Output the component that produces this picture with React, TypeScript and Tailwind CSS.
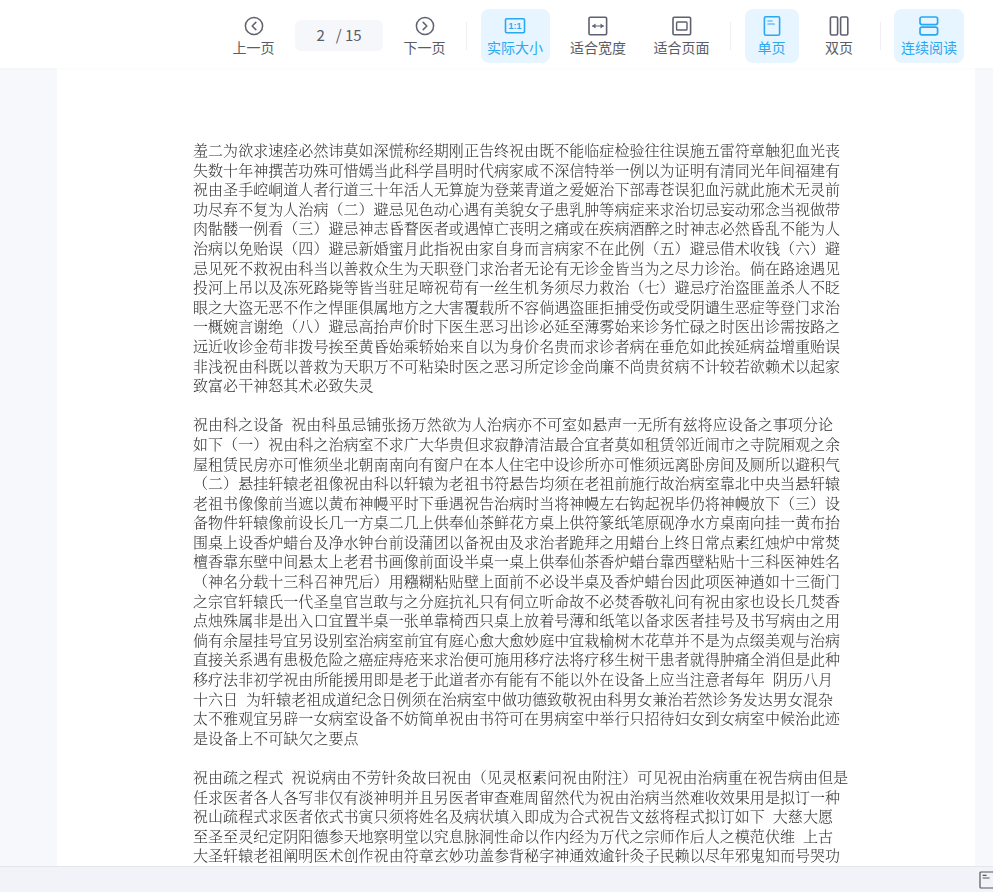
const paragraphs: string[][] = [
  [
    "羞二为欲求速痊必然讳莫如深慌称经期刚正告终祝由既不能临症检验往往误施五雷符章触犯血光丧",
    "失数十年神撰苦功殊可惜嫣当此科学昌明时代病家咸不深信特举一例以为证明有清同光年间福建有",
    "祝由圣手崆峒道人者行道三十年活人无算旋为登莱青道之爱姬治下部毒苍误犯血污就此施术无灵前",
    "功尽弃不复为人治病（二）避忌见色动心遇有美貌女子患乳肿等病症来求治切忌妄动邪念当视做带",
    "肉骷髅一例看（三）避忌神志昏瞀医者或遇悼亡丧明之痛或在疾病酒醉之时神志必然昏乱不能为人",
    "治病以免贻误（四）避忌新婚蜜月此指祝由家自身而言病家不在此例（五）避忌借术收钱（六）避",
    "忌见死不救祝由科当以善救众生为天职登门求治者无论有无诊金皆当为之尽力诊治。倘在路途遇见",
    "投河上吊以及冻死路毙等皆当驻足啼祝苟有一丝生机务须尽力救治（七）避忌疗治盗匪盖杀人不眨",
    "眼之大盗无恶不作之悍匪俱属地方之大害覆载所不容倘遇盗匪拒捕受伤或受阴谴生恶症等登门求治",
    "一概婉言谢绝（八）避忌高抬声价时下医生恶习出诊必延至薄雾始来诊务忙碌之时医出诊需按路之",
    "远近收诊金苟非拨号挨至黄昏始乘轿始来自以为身价名贵而求诊者病在垂危如此挨延病益增重贻误",
    "非浅祝由科既以普救为天职万不可粘染时医之恶习所定诊金尚廉不尚贵贫病不计较若欲赖术以起家",
    "致富必干神怒其术必致失灵",
  ],
  [
    "祝由科之设备 祝由科虽忌铺张扬万然欲为人治病亦不可室如悬声一无所有兹将应设备之事项分论",
    "如下（一）祝由科之治病室不求广大华贵但求寂静清洁最合宜者莫如租赁邻近闹市之寺院厢观之余",
    "屋租赁民房亦可惟须坐北朝南南向有窗户在本人住宅中设诊所亦可惟须远离卧房间及厕所以避积气",
    "（二）悬挂轩辕老祖像祝由科以轩辕为老祖书符悬告均须在老祖前施行故治病室靠北中央当悬轩辕",
    "老祖书像像前当遮以黄布神幔平时下垂遇祝告治病时当将神幔左右钩起祝毕仍将神幔放下（三）设",
    "备物件轩辕像前设长几一方桌二几上供奉仙茶鲜花方桌上供符篆纸笔原砚净水方桌南向挂一黄布抬",
    "围桌上设香炉蜡台及净水钟台前设蒲团以备祝由及求治者跪拜之用蜡台上终日常点素红烛炉中常焚",
    "檀香靠东壁中间悬太上老君书画像前面设半桌一桌上供奉仙茶香炉蜡台靠西壁粘贴十三科医神姓名",
    "（神名分载十三科召神咒后）用糨糊粘贴壁上面前不必设半桌及香炉蜡台因此项医神遒如十三衙门",
    "之宗官轩辕氏一代圣皇官岂敢与之分庭抗礼只有伺立听命故不必焚香敬礼问有祝由家也设长几焚香",
    "点烛殊属非是出入口宜置半桌一张单靠椅西只桌上放着号薄和纸笔以备求医者挂号及书写病由之用",
    "倘有余屋挂号宜另设别室治病室前宜有庭心愈大愈妙庭中宜栽榆树木花草并不是为点缀美观与治病",
    "直接关系遇有患极危险之癌症痔疮来求治便可施用移疗法将疗移生树干患者就得肿痛全消但是此种",
    "移疗法非初学祝由所能援用即是老于此道者亦有能有不能以外在设备上应当注意者每年 阴历八月",
    "十六日 为轩辕老祖成道纪念日例须在治病室中做功德致敬祝由科男女兼治若然诊务发达男女混杂",
    "太不雅观宜另辟一女病室设备不妨简单祝由书符可在男病室中举行只招待妇女到女病室中候治此迹",
    "是设备上不可缺欠之要点",
  ],
  [
    "祝由疏之程式 祝说病由不劳针灸故曰祝由（见灵枢素问祝由附注）可见祝由治病重在祝告病由但是",
    "任求医者各人各写非仅有淡神明并且另医者审查难周留然代为祝由治病当然难收效果用是拟订一种",
    "祝山疏程式求医者依式书寅只须将姓名及病状填入即成为合式祝告文兹将程式拟订如下 大慈大愿",
    "至圣至灵纪定阴阳德参天地察明堂以究息脉洞性命以作内经为万代之宗师作后人之模范伏维 上古",
    "大圣轩辕老祖阐明医术创作祝由符章玄妙功盖参背秘字神通效逾针灸子民赖以尽年邪鬼知而号哭功",
  ],
];

const GRAY = "#5f616e";
const BLUE = "#2aa8f2";

function Tool({
  label,
  active,
  width,
  children,
}: {
  label: string;
  active?: boolean;
  width: string;
  children: React.ReactNode;
}) {
  return (
    <div
      className={`flex h-[54px] flex-col items-center justify-center rounded-lg ${width} ${
        active ? "bg-[#e6f5ff] text-[#2aa8f2]" : "text-[#5a5c66]"
      }`}
    >
      <div className="flex h-[20px] w-[22px] items-center justify-center">{children}</div>
      <div className="mt-[1px] whitespace-nowrap text-[14px] leading-[20px]">{label}</div>
    </div>
  );
}

function Divider() {
  return <div className="h-[28px] w-px bg-[#eef0f3]" />;
}

function Icon({ children }: { children: React.ReactNode }) {
  return (
    <svg width="22" height="20" viewBox="0 0 22 20" fill="none" strokeLinecap="round" strokeLinejoin="round">
      {children}
    </svg>
  );
}

export default function App() {
  return (
    <div className="flex h-[892px] w-[993px] flex-col overflow-hidden bg-[#f7f8fc] font-['Noto_Sans_CJK_SC','Noto_Sans',sans-serif]">
      <header className="relative z-10 flex h-[68px] shrink-0 items-center justify-end gap-[13.5px] bg-white pr-[29px] pt-[4px] shadow-[0_1px_2px_rgba(0,0,0,0.02)]">
        <Tool label="上一页" width="w-[56px]">
          <Icon>
            <circle cx="11" cy="10" r="8.6" stroke={GRAY} strokeWidth="1.5" />
            <path d="M12.8 6.4 9.2 10l3.6 3.6" stroke={GRAY} strokeWidth="1.5" />
          </Icon>
        </Tool>
        <div className="-mt-[1px] flex h-[31px] w-[88px] items-center justify-center rounded-md bg-[#f5f7fb] text-[15px] text-[#5a5c66]">
          <span>2</span>
          <span className="ml-[11px]">/ 15</span>
        </div>
        <Tool label="下一页" width="w-[56px]">
          <Icon>
            <circle cx="11" cy="10" r="8.6" stroke={GRAY} strokeWidth="1.5" />
            <path d="M9.2 6.4 12.8 10l-3.6 3.6" stroke={GRAY} strokeWidth="1.5" />
          </Icon>
        </Tool>
        <Divider />
        <Tool label="实际大小" active width="w-[69px]">
          <svg width="22" height="18" viewBox="0 0 22 18" fill="none">
            <rect x="1.5" y="1.8" width="19" height="14" rx="1.2" stroke={BLUE} strokeWidth="1.6" />
            <text x="11" y="12.4" textAnchor="middle" fontSize="9" fontWeight="700" fill={BLUE} fontFamily="Liberation Sans">
              1:1
            </text>
          </svg>
        </Tool>
        <Tool label="适合宽度" width="w-[70px]">
          <Icon>
            <rect x="2" y="1.2" width="17.6" height="17.6" rx="1.2" stroke={GRAY} strokeWidth="1.6" />
            <path d="M5.5 10h11" stroke={GRAY} strokeWidth="1.1" />
            <path d="M8 8.2 5.6 10 8 11.8zM14 8.2 16.4 10 14 11.8z" fill={GRAY} stroke={GRAY} strokeWidth="0.6" />
          </Icon>
        </Tool>
        <Tool label="适合页面" width="w-[70px]">
          <Icon>
            <rect x="2" y="1.2" width="17.6" height="17.6" rx="1.2" stroke={GRAY} strokeWidth="1.6" />
            <rect x="5.6" y="6" width="10.4" height="8" rx="0.8" stroke={GRAY} strokeWidth="1.4" />
          </Icon>
        </Tool>
        <Divider />
        <Tool label="单页" active width="w-[54px]">
          <Icon>
            <rect x="3.4" y="0.8" width="15.2" height="18.4" rx="1.4" stroke={BLUE} strokeWidth="1.6" />
            <path d="M6.8 5h4.4M6.8 8h6.6" stroke={BLUE} strokeWidth="1.2" />
          </Icon>
        </Tool>
        <Tool label="双页" width="w-[54px]">
          <Icon>
            <rect x="2.4" y="1" width="7.2" height="18" rx="1.4" stroke={GRAY} strokeWidth="1.6" />
            <rect x="12.6" y="1" width="7.2" height="18" rx="1.4" stroke={GRAY} strokeWidth="1.6" />
          </Icon>
        </Tool>
        <Divider />
        <Tool label="连续阅读" active width="w-[70px]">
          <Icon>
            <rect x="2" y="1" width="17.6" height="7.6" rx="2" stroke={BLUE} strokeWidth="1.7" />
            <rect x="2" y="11.2" width="17.6" height="7.6" rx="2" stroke={BLUE} strokeWidth="1.7" />
          </Icon>
        </Tool>
      </header>

      <main className="min-h-0 flex-1 overflow-hidden pl-[57px] pr-[18px]">
        <div className="h-full bg-white pl-[136px] pt-[72px] font-['Noto_Serif_CJK_SC','Noto_Sans_CJK_SC',serif] text-[15px] font-light leading-[19.6px] tracking-[0.05px] text-[#333] blur-[0.3px]">
          {paragraphs.map((lines, i) => (
            <div key={i} className="mb-[19.6px]">
              {lines.map((line, j) => (
                <div key={j} className="h-[19.6px] whitespace-nowrap [word-spacing:4px]">
                  {line}
                </div>
              ))}
            </div>
          ))}
        </div>
      </main>

      <footer className="flex h-[26px] shrink-0 items-center justify-end border-t border-[#e4e6eb] bg-[#f1f3f8]">
        <svg width="14" height="18" viewBox="0 0 14 18" fill="none">
          <rect x="1" y="1" width="14" height="16" rx="1" stroke="#55575f" strokeWidth="1.2" />
          <path d="M3.6 4.4h4M3.6 7h7" stroke="#55575f" strokeWidth="1.1" />
        </svg>
      </footer>
    </div>
  );
}
